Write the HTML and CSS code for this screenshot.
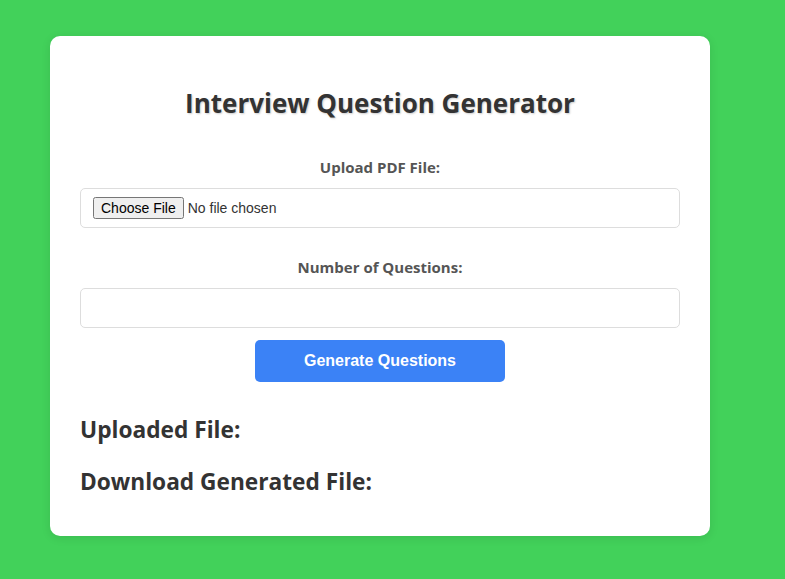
FILE: index.html
```html
<!DOCTYPE html>
<html lang="en">
<head>
<meta charset="utf-8">
<title>Interview Question Generator</title>
<link rel="stylesheet" href="styles.css">
</head>
<body>
<div class="card">
  <h1 class="title">Interview Question Generator</h1>
  <form class="form">
    <div class="group">
      <label class="label" for="pdf">Upload PDF File:</label>
      <input class="field file" type="file" id="pdf">
    </div>
    <div class="group">
      <label class="label" for="num">Number of Questions:</label>
      <input class="field" type="number" id="num">
    </div>
    <button class="btn" type="button">Generate Questions</button>
  </form>
  <h3 class="section first">Uploaded File:</h3>
  <h3 class="section">Download Generated File:</h3>
</div>
</body>
</html>
```
FILE: styles.css
```css
html, body {
  margin: 0;
  padding: 0;
}
body {
  background: #42d15a;
  font-family: "Open Sans", "Noto Sans", sans-serif;
  color: #333;
  padding: 36px 75px 43px 50px;
}
.card {
  width: 660px;
  height: 500px;
  box-sizing: border-box;
  background: #fff;
  border-radius: 10px;
  box-shadow: 0 2px 10px rgba(0, 0, 0, 0.1);
  padding: 30px;
}
.title {
  font-size: 26px;
  font-weight: 700;
  text-align: center;
  margin: 19px 0 0;
  line-height: 36px;
  color: #333;
  text-shadow: 1px 1px 2px rgba(0, 0, 0, 0.2);
}
.form {
  margin-top: 36px;
}
.group {
  margin-bottom: 29px;
}
.group:last-of-type {
  margin-bottom: 12px;
}
.label {
  display: block;
  text-align: center;
  font-size: 15px;
  font-weight: 700;
  line-height: 20px;
  color: #555;
  margin-bottom: 11px;
}
.field {
  display: block;
  width: 100%;
  height: 40px;
  box-sizing: border-box;
  border: 1px solid #ddd;
  border-radius: 5px;
  padding: 0 12px;
  font-size: 14px;
  background: #fff;
}
.file {
  padding: 8px 12px;
}
.btn {
  display: block;
  margin: 0 auto;
  width: 250px;
  height: 42px;
  border: none;
  border-radius: 5px;
  background: #3b82f6;
  color: #fff;
  font-family: "Liberation Sans", Arial, sans-serif;
  font-size: 16px;
  font-weight: 700;
  cursor: pointer;
}
.section {
  font-size: 22.7px;
  font-weight: 700;
  line-height: 30px;
  margin: 22px 0 0;
  color: #333;
}
.section.first {
  margin-top: 33px;
}
```
